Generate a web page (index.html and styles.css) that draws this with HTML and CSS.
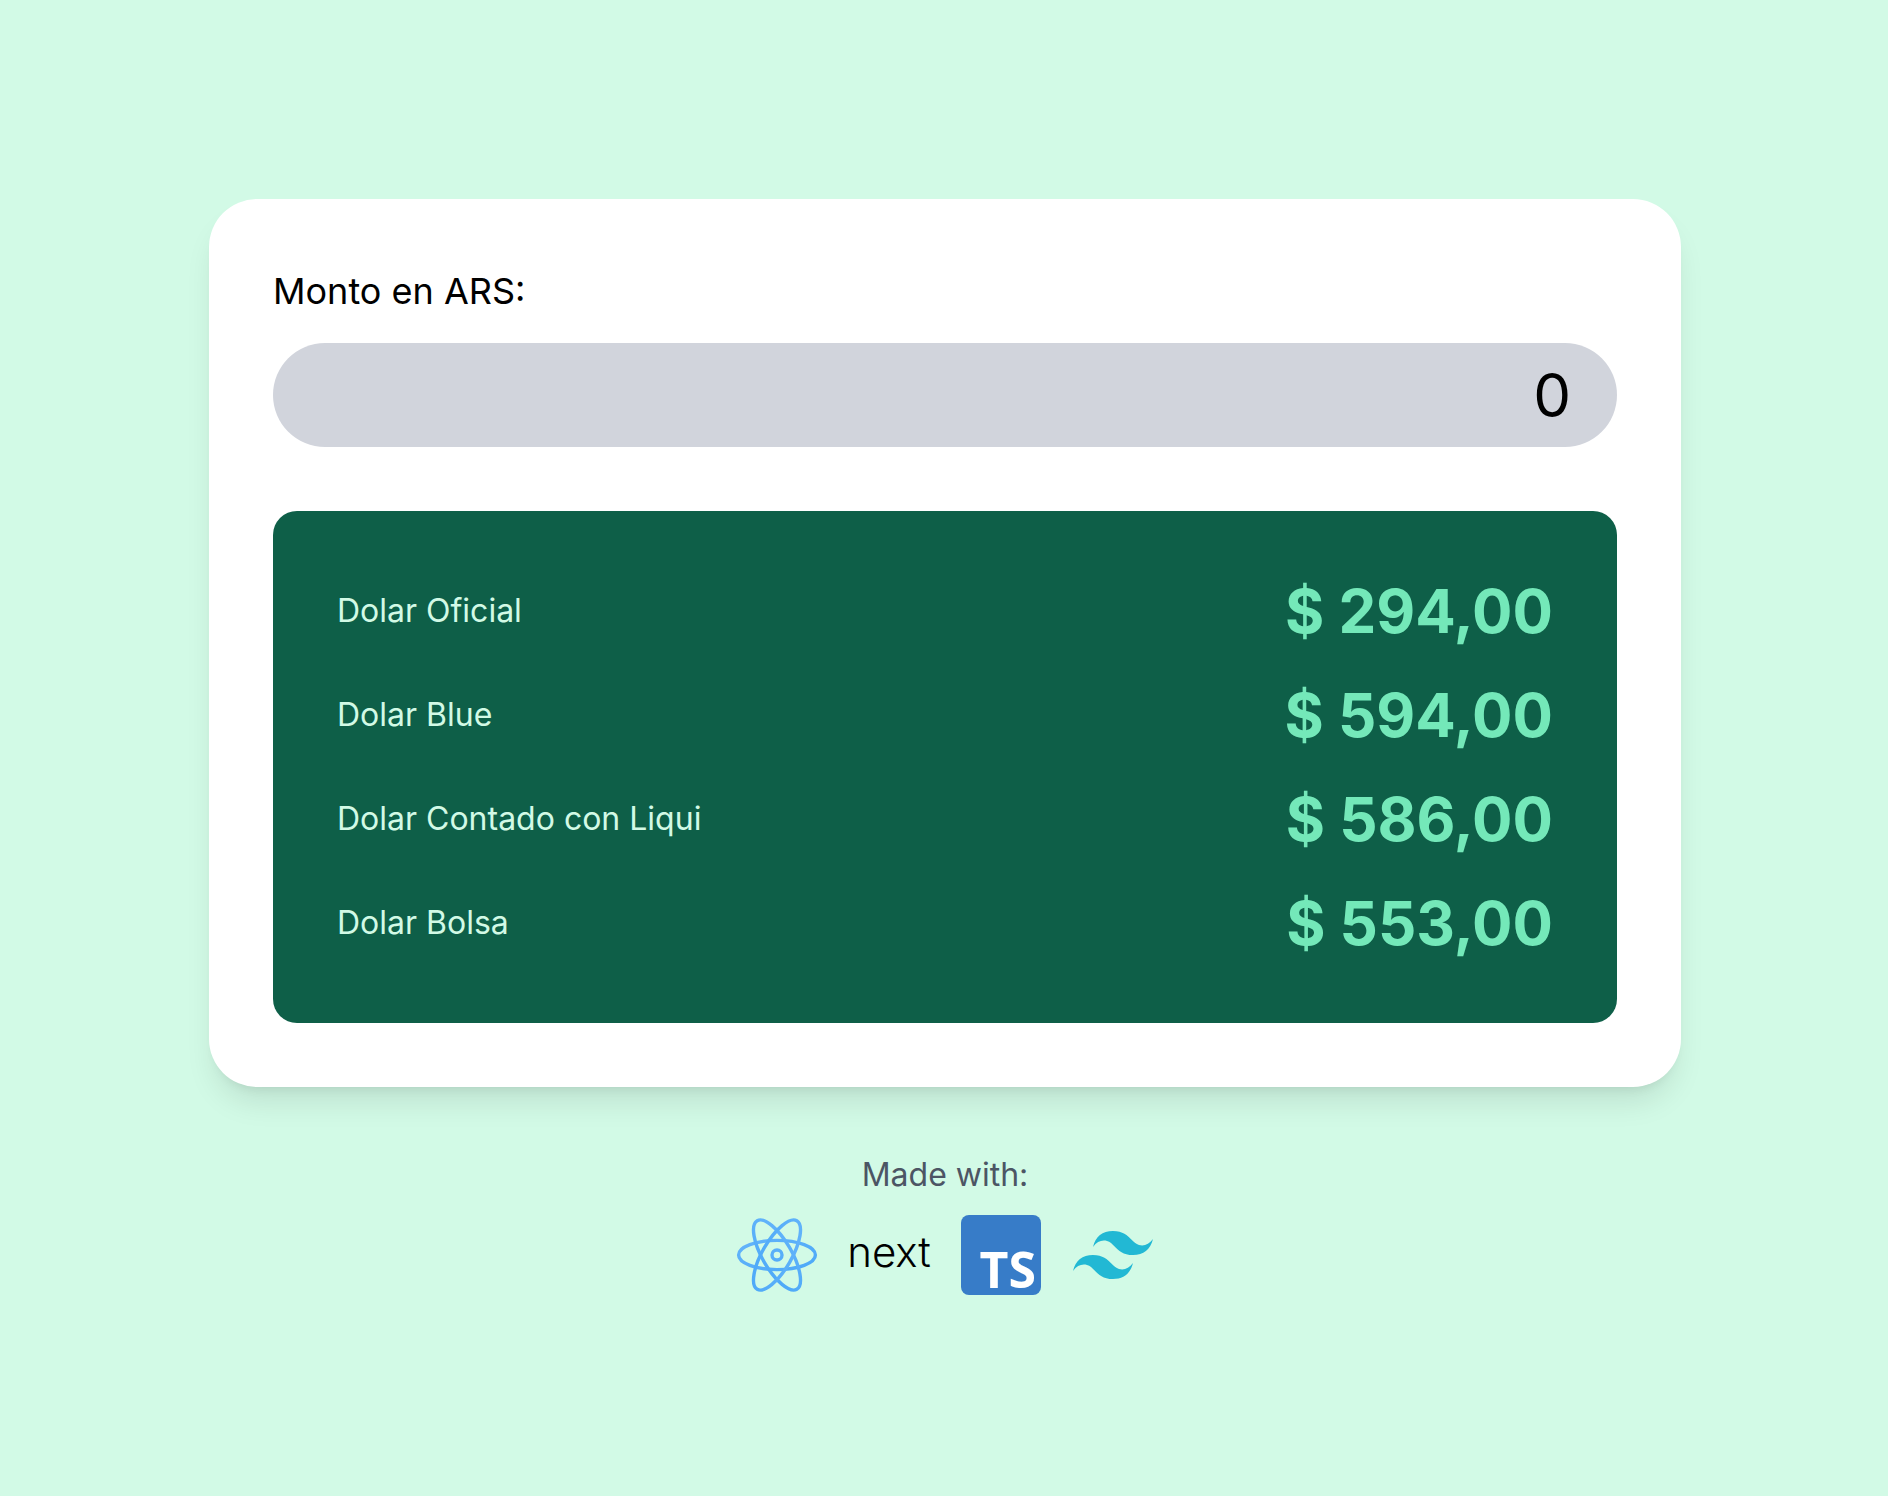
FILE: index.html
```html
<!DOCTYPE html>
<html lang="es">
<head>
  <meta charset="utf-8">
  <meta name="viewport" content="width=device-width, initial-scale=1">
  <title>Monto en ARS</title>
  <link rel="stylesheet" href="styles.css">
</head>
<body>
  <main class="page">
    <section class="card">
      <form class="amount">
        <label class="amount-label" for="amount">Monto en ARS:</label>
        <input class="amount-input" id="amount" type="text" inputmode="decimal" value="0">
      </form>
      <dl class="rates">
        <div class="rate">
          <dt class="rate-name">Dolar Oficial</dt>
          <dd class="rate-value">$ 294,00</dd>
        </div>
        <div class="rate">
          <dt class="rate-name">Dolar Blue</dt>
          <dd class="rate-value">$ 594,00</dd>
        </div>
        <div class="rate">
          <dt class="rate-name">Dolar Contado con Liqui</dt>
          <dd class="rate-value">$ 586,00</dd>
        </div>
        <div class="rate">
          <dt class="rate-name">Dolar Bolsa</dt>
          <dd class="rate-value">$ 553,00</dd>
        </div>
      </dl>
    </section>
    <footer class="credits">
      <p class="credits-title">Made with:</p>
      <ul class="logos">
        <li>
          <svg class="logo" viewBox="0 0 80 80" aria-hidden="true">
            <defs>
              <linearGradient id="react-blue" gradientUnits="userSpaceOnUse" x1="0" y1="0" x2="40" y2="80">
                <stop offset="0" stop-color="#6cb8fb"/>
                <stop offset="1" stop-color="#4aa8f8"/>
              </linearGradient>
            </defs>
            <g fill="none" stroke="url(#react-blue)" stroke-width="3.4">
              <ellipse cx="40" cy="40" rx="38.4" ry="14.6"/>
              <ellipse cx="40" cy="40" rx="39.6" ry="14.6" transform="rotate(60 40 40)"/>
              <ellipse cx="40" cy="40" rx="39.6" ry="14.6" transform="rotate(120 40 40)"/>
              <circle cx="40" cy="40" r="5"/>
            </g>
          </svg>
        </li>
        <li>
          <svg class="logo" viewBox="0 0 80 80" aria-hidden="true">
            <text class="next-word" x="40" y="52" text-anchor="middle">next</text>
          </svg>
        </li>
        <li>
          <svg class="logo" viewBox="0 0 80 80" aria-hidden="true">
            <rect width="80" height="80" rx="8" fill="#377cc8"/>
            <text class="ts-word" x="75" y="73" text-anchor="end">TS</text>
          </svg>
        </li>
        <li>
          <svg class="logo" viewBox="0 -10.8 54 54" aria-hidden="true">
            <path fill="#22b8d4" d="M27 0c-7.2 0-11.7 3.6-13.5 10.8 2.7-3.6 5.85-4.95 9.45-4.05 2.054.513 3.522 2.004 5.147 3.653C30.744 13.09 33.808 16.2 40.5 16.2c7.2 0 11.7-3.6 13.5-10.8-2.7 3.6-5.85 4.95-9.45 4.05-2.054-.513-3.522-2.004-5.147-3.653C36.756 3.11 33.692 0 27 0zM13.5 16.2C6.3 16.2 1.8 19.8 0 27c2.7-3.6 5.85-4.95 9.45-4.05 2.054.514 3.522 2.004 5.147 3.653C17.244 29.29 20.308 32.4 27 32.4c7.2 0 11.7-3.6 13.5-10.8-2.7 3.6-5.85 4.95-9.45 4.05-2.054-.513-3.522-2.004-5.147-3.653C23.256 19.31 20.192 16.2 13.5 16.2z"/>
          </svg>
        </li>
      </ul>
    </footer>
  </main>
</body>
</html>
```
FILE: styles.css
```css
*,
*::before,
*::after {
  box-sizing: border-box;
}

body {
  margin: 0;
  background: #d2fae6;
  color: #000;
  font-family: Inter, "Liberation Sans", sans-serif;
}

.page {
  display: flex;
  flex-direction: column;
  align-items: center;
  justify-content: center;
  gap: 64px;
  min-height: 100vh;
  padding: 32px 32px 34px 34px;
}

.card {
  display: flex;
  flex-direction: column;
  gap: 64px;
  width: 100%;
  max-width: 1472px;
  padding: 64px;
  border-radius: 48px;
  background: #fff;
  box-shadow:
    0 20px 30px -6px rgba(0, 0, 0, 0.1),
    0 8px 12px -8px rgba(0, 0, 0, 0.1);
}

.amount {
  display: flex;
  flex-direction: column;
  gap: 24px;
}

.amount-label {
  font-size: 36px;
  line-height: 56px;
}

.amount-input {
  width: 100%;
  height: 104px;
  padding: 16px 46px;
  border: 0;
  border-radius: 52px;
  background: #d1d4dc;
  color: inherit;
  font: inherit;
  font-size: 60px;
  line-height: 72px;
  text-align: right;
}

.rates {
  display: flex;
  flex-direction: column;
  gap: 32px;
  margin: 0;
  padding: 64px;
  border-radius: 24px;
  background: #0e5f48;
}

.rate {
  display: flex;
  align-items: center;
  justify-content: space-between;
  gap: 32px;
}

.rate-name {
  color: #d2fae6;
  font-size: 32px;
  line-height: 48px;
}

.rate-value {
  margin: 0;
  color: #74e8b9;
  font-size: 60px;
  font-weight: 700;
  line-height: 72px;
  white-space: nowrap;
}

.credits {
  display: flex;
  flex-direction: column;
  align-items: center;
  gap: 16px;
}

.credits-title {
  margin: 0;
  color: #4c5564;
  font-size: 32px;
  line-height: 48px;
}

.logos {
  display: flex;
  gap: 32px;
  margin: 0;
  padding: 0;
  list-style: none;
}

.logo {
  display: block;
  width: 80px;
  height: 80px;
  overflow: visible;
}

.next-word {
  fill: #000;
  font-family: Inter, sans-serif;
  font-size: 42px;
  font-weight: 300;
}

.ts-word {
  fill: #fff;
  font-family: "Open Sans", "Noto Sans", sans-serif;
  font-size: 50px;
  font-weight: 700;
}
```
